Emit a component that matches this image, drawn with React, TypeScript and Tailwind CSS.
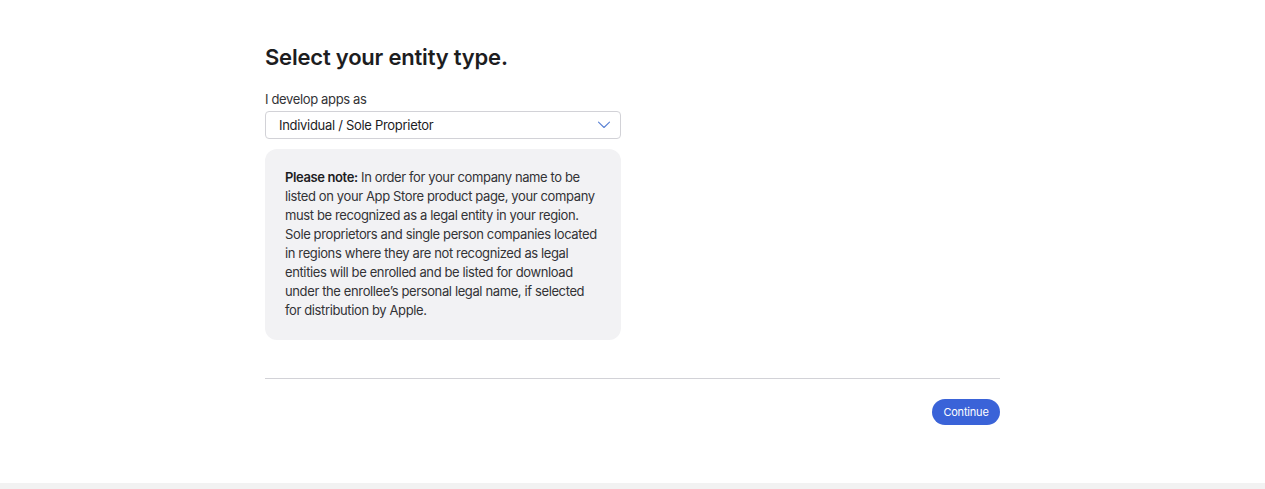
import React from "react";

const lines = [
  "listed on your App Store product page, your company",
  "must be recognized as a legal entity in your region.",
  "Sole proprietors and single person companies located",
  "in regions where they are not recognized as legal",
  "entities will be enrolled and be listed for download",
  "under the enrollee’s personal legal name, if selected",
  "for distribution by Apple.",
];

export default function App() {
  return (
    <div className="w-[1265px] h-[489px] bg-white flex flex-col text-[#1d1d1f]" style={{ fontFamily: "Inter, 'Noto Sans', sans-serif" }}>
      <div className="flex-1 flex justify-center">
        <div className="w-[735px] pt-[42px]">
          <h1 className="text-[22px] leading-[30px] font-semibold tracking-[-0.2px]">Select your entity type.</h1>
          <div className="mt-[19px] text-[13px] leading-[16px] tracking-[-0.35px] text-[#333336]">I develop apps as</div>
          <div className="mt-[4px] w-[356px] h-[28px] border border-[#d2d2d7] rounded-[4px] flex items-center justify-between pl-[13px] pr-[9px] pt-[2px] text-[13px] tracking-[-0.3px] text-[#1d1d1f]">
            <span>Individual / Sole Proprietor</span>
            <svg width="14" height="8" viewBox="0 0 14 8" fill="none" className="mb-[2px]">
              <path d="M1.5 1.2 L7 6.5 L12.5 1.2" stroke="#5b82d4" strokeWidth="1.1" strokeLinecap="round" strokeLinejoin="round" />
            </svg>
          </div>
          <div className="mt-[10px] w-[356px] rounded-[12px] bg-[#f2f2f4] pl-[20px] pr-[10px] pt-[19px] pb-[20px] text-[13px] leading-[19px] tracking-[-0.38px] text-[#333336] whitespace-nowrap">
            <div>
              <span className="font-semibold text-[#1d1d1f]">Please note:</span> In order for your company name to be
            </div>
            {lines.map((l) => (
              <div key={l}>{l}</div>
            ))}
          </div>
          <div className="mt-[38px] h-px bg-[#d2d2d7]" />
          <div className="mt-[20px] flex justify-end">
            <button className="h-[26px] w-[68px] rounded-full bg-[#3a63d8] text-white text-[11px] tracking-[-0.2px]">Continue</button>
          </div>
        </div>
      </div>
      <div className="h-[6px] bg-[#f2f2f2]" />
    </div>
  );
}
